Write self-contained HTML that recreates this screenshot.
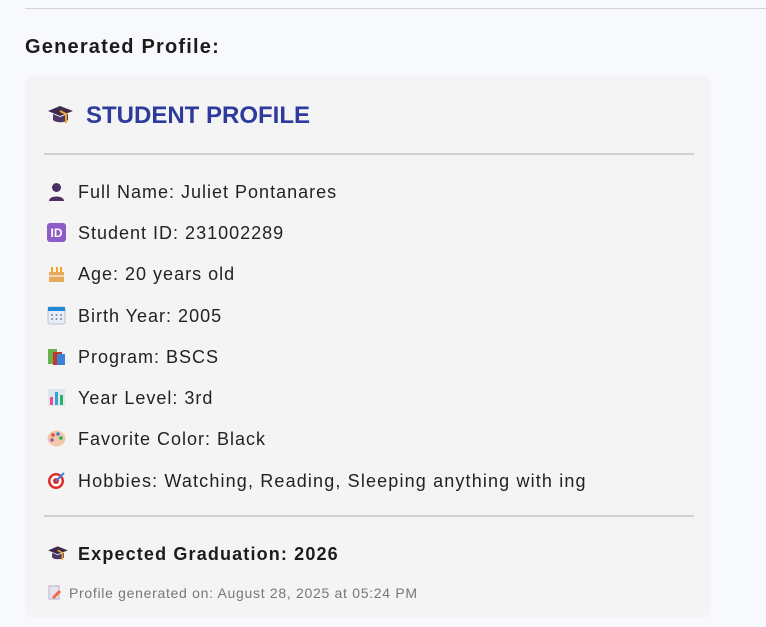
<!DOCTYPE html>
<html><head><style>
body{margin:0;width:766px;height:627px;background:#f8f9fd;font-family:"Liberation Sans",sans-serif;position:relative;overflow:hidden;color:#1f1f1f}
.topline{position:absolute;left:25px;right:0;top:8px;height:1px;background:#d3d3d8}
h2{position:absolute;left:25px;top:36px;margin:0;font-size:20px;font-weight:bold;color:#1c1c1c;letter-spacing:1.2px}
.card{position:absolute;left:25px;top:76px;width:686px;height:542px;background:#f4f4f4;border-radius:10px}
.title{position:absolute;left:86px;top:102px;font-size:24px;font-weight:bold;color:#2e3a9c}
.hr{position:absolute;left:44px;width:650px;height:2px;background:#d0d0d4}
.row{position:absolute;left:53px;font-size:18px;color:#222;line-height:22px;letter-spacing:1px}
.ic{position:absolute;left:47px;width:19px;height:19px}
.foot{position:absolute;left:69px;top:585px;font-size:14px;color:#777;letter-spacing:0.7px}
</style></head><body>
<div class="topline"></div>
<h2>Generated Profile:</h2>
<div class="card"></div>
<svg class="ic" style="top:103px;left:47px;width:27px;height:24px" viewBox="0 0 27 24"><path d="M1 8L13 3L26 8L13 13Z" fill="#3d2a4e"/><path d="M6 11v6c3 3 12 3 15 0v-6l-8 3z" fill="#4f3863"/><path d="M13 8L19 11V20" stroke="#f4a623" stroke-width="2" fill="none"/></svg>
<div class="title">STUDENT PROFILE</div>
<div class="hr" style="top:153px"></div>
<svg class="ic" style="top:182px" viewBox="0 0 19 19"><circle cx="9.5" cy="5.5" r="4.5" fill="#4a2f60"/><path d="M2 19c0-6 15-6 15 0z" fill="#4a2f60"/></svg>
<div class="row" style="left:78px;top:181px">Full Name: Juliet Pontanares</div>
<svg class="ic" style="top:223px" viewBox="0 0 19 19"><rect width="19" height="19" rx="3" fill="#8e5cc7"/><text x="9.5" y="14" font-size="12" font-weight="bold" fill="#fff" text-anchor="middle" font-family="Liberation Sans">ID</text></svg>
<div class="row" style="left:78px;top:222px">Student ID: 231002289</div>
<svg class="ic" style="top:264px" viewBox="0 0 19 19"><rect x="2" y="8" width="15" height="10" fill="#e7a85c"/><rect x="2" y="11" width="15" height="2" fill="#f3d9b0"/><rect x="4" y="3" width="2" height="5" fill="#f4a623"/><rect x="9" y="3" width="2" height="5" fill="#f4a623"/><rect x="13" y="3" width="2" height="5" fill="#f4a623"/></svg>
<div class="row" style="left:78px;top:263px">Age: 20 years old</div>
<svg class="ic" style="top:306px" viewBox="0 0 19 19"><rect x="1" y="1" width="17" height="17" rx="2" fill="#e8eef5" stroke="#b8c4d0"/><rect x="1" y="1" width="17" height="4" fill="#1f8ad6"/><g fill="#8a7bb0"><circle cx="5" cy="9" r="1"/><circle cx="9.5" cy="9" r="1"/><circle cx="14" cy="9" r="1"/><circle cx="5" cy="13" r="1"/><circle cx="9.5" cy="13" r="1"/><circle cx="14" cy="13" r="1"/></g></svg>
<div class="row" style="left:78px;top:305px">Birth Year: 2005</div>
<svg class="ic" style="top:347px" viewBox="0 0 19 19"><rect x="1" y="2" width="9" height="15" fill="#6ab04c"/><rect x="6" y="5" width="9" height="13" fill="#c0392b"/><rect x="10" y="7" width="8" height="11" fill="#3b82d6"/></svg>
<div class="row" style="left:78px;top:346px">Program: BSCS</div>
<svg class="ic" style="top:388px" viewBox="0 0 19 19"><rect x="1" y="1" width="17" height="17" fill="#dfe6ee"/><rect x="3" y="9" width="3" height="8" fill="#e74c8b"/><rect x="8" y="4" width="3" height="13" fill="#2fa5d9"/><rect x="13" y="7" width="3" height="10" fill="#27b36a"/></svg>
<div class="row" style="left:78px;top:387px">Year Level: 3rd</div>
<svg class="ic" style="top:429px" viewBox="0 0 19 19"><ellipse cx="9.5" cy="9.5" rx="9" ry="8" fill="#f2c9a8"/><circle cx="6" cy="6" r="1.8" fill="#e74c3c"/><circle cx="11" cy="5" r="1.8" fill="#3b82d6"/><circle cx="14" cy="9" r="1.8" fill="#27ae60"/><circle cx="5" cy="11" r="1.8" fill="#9b59b6"/></svg>
<div class="row" style="left:78px;top:428px">Favorite Color: Black</div>
<svg class="ic" style="top:471px" viewBox="0 0 19 19"><circle cx="9" cy="10" r="8" fill="#e02b2b"/><circle cx="9" cy="10" r="5.5" fill="#fff"/><circle cx="9" cy="10" r="3" fill="#e02b2b"/><path d="M9 10L17 2" stroke="#3b82d6" stroke-width="2"/></svg>
<div class="row" style="left:78px;top:470px;letter-spacing:1.15px">Hobbies: Watching, Reading, Sleeping anything with ing</div>
<div class="hr" style="top:515px"></div>
<svg class="ic" style="top:544px;width:22px;height:19px" viewBox="0 0 27 24"><path d="M1 8L13 3L26 8L13 13Z" fill="#3d2a4e"/><path d="M6 11v6c3 3 12 3 15 0v-6l-8 3z" fill="#4f3863"/><path d="M13 8L19 11V20" stroke="#f4a623" stroke-width="2" fill="none"/></svg>
<div class="row" style="left:78px;top:543px;font-weight:bold;color:#1c1c1c;letter-spacing:1.15px">Expected Graduation: 2026</div>
<svg class="ic" style="top:585px;left:48px;width:14px;height:15px" viewBox="0 0 14 15"><rect x="1" y="1" width="10" height="13" fill="#e8e4ee" stroke="#b8b0c8"/><path d="M5 13L12 6" stroke="#f06a4a" stroke-width="3"/></svg>
<div class="foot">Profile generated on: August 28, 2025 at 05:24 PM</div>
</body></html>
